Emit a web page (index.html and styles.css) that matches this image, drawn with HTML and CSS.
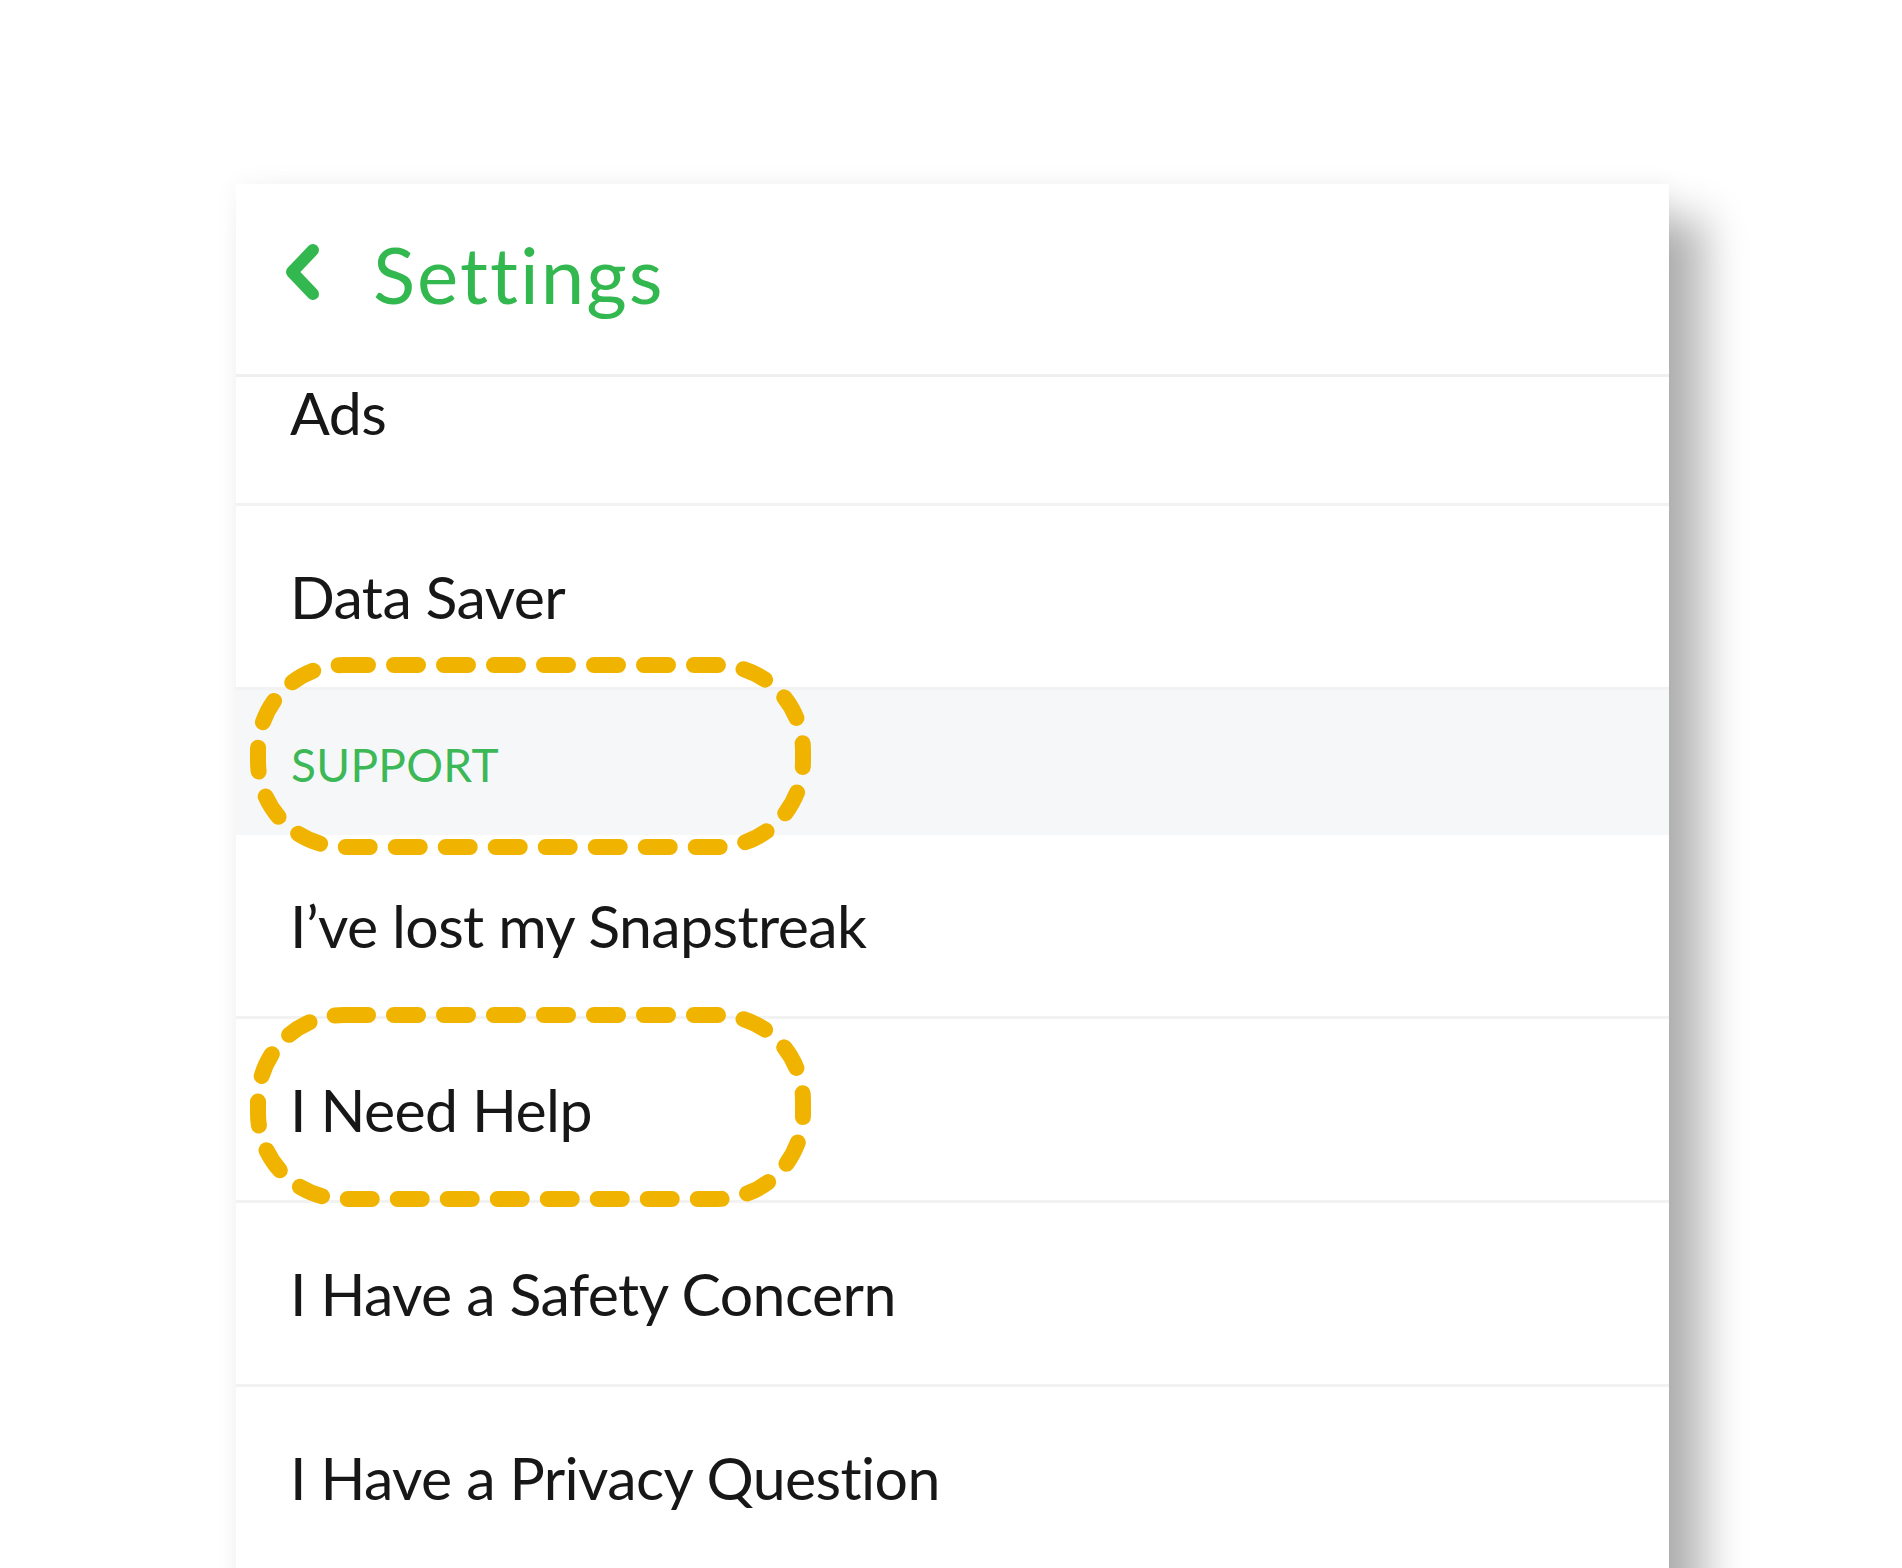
FILE: index.html
```html
<!DOCTYPE html>
<html>
    <head>
        <meta charset="utf-8">
        <title>Settings</title>
        <link rel="stylesheet" href="styles.css">
    </head>
    <body>
        <div class="panel">
            <div class="topbar">
                <svg class="back" width="44" height="64" viewBox="0 0 44 64">
                    <path d="M30 10 L9 32 L30 54" fill="none" stroke="#33b84f" stroke-width="12" stroke-linecap="round" stroke-linejoin="round"/>
                </svg>
                <span class="title">Settings</span>
            </div>

            <div class="list">
                <div class="row first">Ads</div>
                <div class="row">Data Saver</div>
                <div class="section">SUPPORT</div>
                <div class="row">I&rsquo;ve lost my Snapstreak</div>
                <div class="row">I Need Help</div>
                <div class="row">I Have a Safety Concern</div>
                <div class="row">I Have a Privacy Question</div>
            </div>

            <!-- hand drawn highlight rings -->
            <svg class="ring ring-support" width="580" height="205" viewBox="0 0 580 205">
                <rect x="12" y="10" width="545" height="182" rx="86" ry="86" />
            </svg>
            <svg class="ring ring-help" width="580" height="205" viewBox="0 0 580 205">
                <rect x="12" y="10" width="545" height="184" rx="86" ry="86" />
            </svg>
        </div>
    </body>
</html>
```

FILE: styles.css
```css
html, body {
    margin: 0;
    padding: 0;
    background-color: #FFFFFF;
    height: 1568px;
    overflow: hidden;
}

body {
    font-family: "Lato", "Noto Sans", sans-serif;
    font-variant-ligatures: none;
    color: #171717;
    padding-top: 184px;
    padding-left: 236px;
    box-sizing: border-box;
}

.panel {
    position: relative;
    width: 1433px;
    height: 1420px;
    background-color: #FFFFFF;
    box-shadow: 35px 34px 40px rgba(0, 0, 0, 0.30), 0 0 24px rgba(0, 0, 0, 0.05);
}

.topbar {
    display: flex;
    align-items: center;
    height: 190px;
    padding-left: 47px;
    border-bottom: 3px solid #efefef;
}

.back {
    display: block;
    margin-top: -14px;
}

.title {
    margin-left: 46px;
    margin-top: -8px;
    font-size: 78px;
    letter-spacing: 2px;
    color: #33b84f;
    line-height: 1.2;
}

.list {
    overflow: hidden;
}

.row {
    display: flex;
    align-items: center;
    box-sizing: border-box;
    height: 184px;
    padding-left: 54px;
    padding-top: 2px;
    font-size: 59px;
    letter-spacing: -0.6px;
    line-height: 1.2;
    border-bottom: 3px solid #f2f2f2;
}

.row.first {
    margin-top: -55px;
}

.section {
    display: flex;
    align-items: center;
    height: 145px;
    padding-left: 55px;
    padding-top: 4px;
    box-sizing: border-box;
    background-color: #f6f7f9;
    color: #3cb857;
    font-size: 46px;
    letter-spacing: 0.3px;
    line-height: 1.2;
}

.ring {
    position: absolute;
    left: 10px;
}

.ring rect {
    fill: none;
    stroke: #f0b400;
    stroke-width: 16;
    stroke-linecap: round;
    stroke-dasharray: 24 26;
}

.ring-support {
    top: 471px;
}

.ring-help {
    top: 821px;
}
```
